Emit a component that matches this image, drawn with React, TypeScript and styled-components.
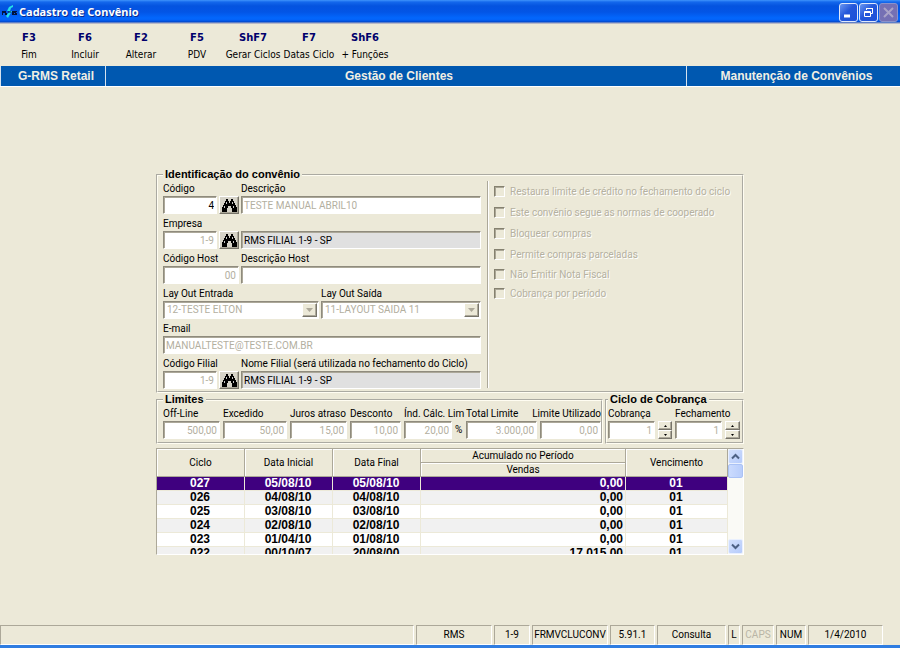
import React, { useId } from "react";
import styled, { createGlobalStyle, css } from "styled-components";

const face = "#ece9d8";
const shade = "#aca899";
const ui = "Roboto, 'Liberation Sans', sans-serif";
const strong = "'Liberation Sans', Arial, sans-serif";

const GlobalStyle = createGlobalStyle`
  *, *::before, *::after { box-sizing: border-box; }
  body { margin: 0; background: ${face}; }
  button, input, select { font: inherit; margin: 0; border-radius: 0; }
`;

const Window = styled.div`
  min-height: 100vh;
  display: flex;
  flex-direction: column;
  background: ${face};
  color: #000;
  font: 10px/14px ${ui};
  border-bottom: 3px solid #2f7de1;
`;

const TitleBar = styled.header`
  display: flex;
  align-items: center;
  height: 24px;
  padding: 0 2px;
  background: linear-gradient(#3f94fb 0, #1468ec 2px, #0453df 6px, #0355e6 12px, #0367fd 18px, #0362f8 20px, #0346c8 22px, #b8b9c8 23px, #b8b9c8 24px);
`;

const Title = styled.h1`
  flex: 1;
  margin: 0 0 0 2px;
  font: bold 11px/22px "Noto Sans", sans-serif;
  color: #fff;
  text-shadow: 1px 1px 0 #0a2a8c;
`;

const Caption = styled.div`
  display: flex;
  gap: 1px;
`;

const CaptionButton = styled.button`
  width: 19px;
  height: 19px;
  padding: 0;
  display: grid;
  place-items: center;
  border: 1px solid #dfe8fb;
  border-radius: 3px;
  background: linear-gradient(135deg, #6a97f2, #2457da 45%, #1c50d8);
  &:disabled {
    border-color: #8a92cc;
    background: #7570b4;
  }
`;

const Toolbar = styled.nav`
  display: flex;
  padding: 7px 0 3px 1px;
  min-height: 42px;
`;

const Tool = styled.button`
  width: 56px;
  padding: 0;
  border: 0;
  background: none;
  color: #000;
  white-space: nowrap;
  display: flex;
  flex-direction: column;
  align-items: center;
  gap: 2px;
  font: 10px/16px "DejaVu Sans Condensed", "DejaVu Sans", sans-serif;
`;

const ToolKey = styled.b`
  font: bold 10px/14px "DejaVu Sans", sans-serif;
  color: #00006c;
`;

const Banner = styled.div`
  display: flex;
  height: 21px;
  background: #0058b0;
  color: #f1efe4;
  font: bold 12px/21px ${strong};
  text-align: center;
  border-bottom: 1px solid #fff;
`;

const BannerCell = styled.div<{ $width?: number }>`
  ${p => (p.$width ? css`flex: 0 0 ${p.$width}px;` : css`flex: 1;`)}
  padding-left: 6px;
  border-left: 1px solid #d5e2ee;
  white-space: nowrap;
`;

const Main = styled.main`
  flex: 1;
  width: 588px;
  max-width: 100%;
  margin: 0 auto;
  padding: 81px 0 16px;
`;

const Group = styled.fieldset`
  min-width: 0;
  margin: 0;
  padding: 0 2px 0 5px;
  border: 2px groove #fffdf2;
`;

const Legend = styled.legend`
  padding: 0 2px;
  font: bold 11px/13px ${strong};
`;

const IdentGroup = styled(Group)`
  display: flex;
`;

const IdentFields = styled.div`
  flex: 0 1 318px;
  min-width: 0;
`;

const FieldRow = styled.div<{ $cols: string }>`
  display: grid;
  grid-template-columns: ${p => p.$cols};
  column-gap: 2px;
  align-items: end;
  padding-bottom: 2px;
`;

const FieldBox = styled.div`
  min-width: 0;
`;

const Label = styled.label<{ $end?: boolean }>`
  display: flex;
  justify-content: ${p => (p.$end ? "flex-end" : "flex-start")};
  height: 15px;
  line-height: 15px;
  white-space: nowrap;
`;

const sunken = css`
  border: 1px solid;
  border-color: #8f8b7d #fff #fff #8f8b7d;
  box-shadow: inset 1px 1px 0 ${shade};
`;

type Tone = "live" | "off" | "gray";

const TextInput = styled.input<{ $tone: Tone; $right?: boolean }>`
  display: block;
  width: 100%;
  height: 18px;
  padding: 0 2px;
  ${sunken}
  background: ${p => (p.$tone === "gray" ? "#e0e0e0" : "#fff")};
  color: ${p => (p.$tone === "off" ? "#b3af9f" : "#000")};
  text-align: ${p => (p.$right ? "right" : "left")};
  outline: 0;
`;

const SelectShell = styled.div`
  display: flex;
  height: 18px;
  ${sunken}
  background: #fff;
`;

const Select = styled.select`
  flex: 1;
  min-width: 0;
  padding: 0 3px;
  border: 0;
  background: none;
  appearance: none;
  color: #b3af9f;
  opacity: 1;
`;

const raised = css`
  border: 1px solid;
  border-color: #fff #77746a #77746a #fff;
  box-shadow: inset -1px -1px 0 ${shade};
  background: ${face};
`;

const Drop = styled.span`
  width: 15px;
  margin: 1px;
  display: grid;
  place-items: center;
  pointer-events: none;
  ${raised}
`;

const LookupButton = styled.button`
  height: 18px;
  padding: 0;
  display: grid;
  place-items: center;
  ${raised}
  background: #d6d3c8;
`;

const Options = styled.div`
  flex: 1;
  margin: 0 0 3px 6px;
  padding: 0 0 0 6px;
  border-left: 1px solid ${shade};
  box-shadow: inset 1px 0 0 #fff;
`;

const Option = styled.label<{ $tight?: boolean }>`
  display: flex;
  align-items: center;
  gap: 5px;
  height: ${p => (p.$tight ? 19 : 21)}px;
  color: #b5b1a1;
  text-shadow: 1px 1px 0 #fff;
  white-space: nowrap;
`;

const Check = styled.input`
  appearance: none;
  width: 11px;
  height: 11px;
  margin: 0;
  border: 1px solid;
  border-color: #85816f #fff #fff #85816f;
  box-shadow: inset 1px 1px 0 #aaa696;
`;

const LowerGroups = styled.div`
  display: flex;
  gap: 2px;
  margin-bottom: 4px;
`;

const LimitGroup = styled(Group)`
  flex: 1;
  padding-bottom: 3px;
`;

const CycleGroup = styled(Group)`
  flex: 0 0 139px;
  padding: 0 1px 3px;
`;

const Limits = styled.div`
  display: flex;
  gap: 3px;
`;

const Limit = styled.div<{ $width: number }>`
  flex: 0 0 ${p => p.$width}px;
  min-width: 0;
`;

const Amount = styled.div`
  display: flex;
  align-items: center;
  gap: 3px;
`;

const AmountInput = styled(TextInput)<{ $size: number }>`
  flex: 0 0 ${p => p.$size}px;
  width: ${p => p.$size}px;
`;

const Spinner = styled.span`
  display: flex;
  flex-direction: column;
  width: 15px;
`;

const SpinButton = styled.button`
  height: 9px;
  padding: 0;
  display: grid;
  place-items: center;
  ${raised}
`;

const GridFrame = styled.div`
  display: flex;
  height: 107px;
  overflow: hidden;
  border: 1px solid;
  border-color: ${shade} #fff #fff ${shade};
  background: #fff;
`;

const GridView = styled.div`
  flex: 1;
  min-width: 0;
  overflow: hidden;
`;

const Table = styled.table`
  width: 100%;
  table-layout: fixed;
  border-collapse: separate;
  border-spacing: 0;
`;

const Th = styled.th`
  height: 14px;
  padding: 0;
  font-weight: normal;
  line-height: 13px;
  background: ${face};
  border-right: 1px solid ${shade};
  border-bottom: 1px solid ${shade};
  box-shadow: inset 1px 1px 0 #fff;
`;

const Tr = styled.tr<{ $selected?: boolean }>`
  background: ${p => (p.$selected ? "#3f007f" : "#fff")};
  color: ${p => (p.$selected ? "#fff" : "#000")};
  &:nth-child(even) { background: #f1f1f1; }
`;

const Td = styled.td<{ $right?: boolean }>`
  height: 14px;
  padding: 0 2px 0 1px;
  font: bold 12px/13px ${strong};
  text-align: ${p => (p.$right ? "right" : "center")};
  border-right: 1px solid ${face};
  border-bottom: 1px solid ${face};
`;

const ScrollTrack = styled.div`
  flex: 0 0 15px;
  display: flex;
  flex-direction: column;
  background: #fafaf6;
`;

const ScrollButton = styled.button`
  height: 15px;
  padding: 0;
  display: grid;
  place-items: center;
  border: 1px solid #e9f0fe;
  border-radius: 2px;
  background: linear-gradient(135deg, #d3e0fd, #b5cbfb);
`;

const ScrollThumb = styled.div`
  height: 14px;
  margin-bottom: auto;
  border: 1px solid #aac2f5;
  border-radius: 2px;
  background: linear-gradient(90deg, #cbdbfe, #b8cdfb);
`;

const StatusBar = styled.footer`
  display: flex;
  gap: 2px;
  padding: 0 17px 0 0;
  line-height: 18px;
  text-align: center;
`;

const StatusCell = styled.div<{ $width?: number; $dim?: boolean }>`
  ${p => (p.$width ? css`flex: 0 0 ${p.$width}px;` : css`flex: 1;`)}
  min-width: 0;
  height: 20px;
  border: 1px solid;
  border-color: ${shade} #fff #fff ${shade};
  color: ${p => (p.$dim ? "#b9b5a6" : "#000")};
  white-space: nowrap;
`;

const Binoculars = () => (
  <svg width="15" height="13" viewBox="0 0 15 13" aria-hidden="true">
    <path d="M4 0h2v2h1v2h1V2h1V0h2v2h1v2h1v2h1v2h1v5h-5V9H9V7H6v2H5v4H0V8h1V6h1V4h1V2h1z" fill="#000" />
    <path d="M4.500 3v2M2.500 7v2M10.500 3v2M11.500 7v2" stroke="#c8c8c8" />
  </svg>
);

const Triangle = ({ up, size = 5, color = "#000" }: { up?: boolean; size?: number; color?: string }) => (
  <svg width={size} height={(size + 1) / 2} viewBox="0 0 10 6" preserveAspectRatio="none" aria-hidden="true">
    <path d={up ? "M5 0 10 6H0z" : "M0 0h10L5 6z"} fill={color} />
  </svg>
);

const Chevron = ({ up }: { up?: boolean }) => (
  <svg width="9" height="7" viewBox="0 0 9 7" aria-hidden="true">
    <path d={up ? "M1 5.500 4.500 2 8 5.500" : "M1 1.500 4.500 5 8 1.500"} fill="none" stroke="#4d6185" strokeWidth="2" />
  </svg>
);

const AppLogo = () => (
  <svg width="15" height="14" viewBox="0 0 15 14" aria-hidden="true">
    <path d="M0 6h4v2H1v2H0zM3 8h2v2H3zM10 6h2v4h-2zM12 6h3v1h-1v1h1v2h-3V9h1V8h-1z" fill="#02143c" />
    <path d="M11 0 7 2 5 6h3l-4 5 2 2 1-2 3-5H8l1-3 2-1z" fill="#25e0e6" />
    <path d="M6 7h3" stroke="#02143c" />
  </svg>
);

interface FieldProps {
  label: string;
  value: string;
  tone?: Tone;
  right?: boolean;
}

const Field = ({ label, value, tone = "off", right }: FieldProps) => {
  const id = useId();
  return (
    <FieldBox>
      <Label htmlFor={id}>{label}</Label>
      <TextInput id={id} defaultValue={value} readOnly={tone !== "live"} $tone={tone} $right={right} />
    </FieldBox>
  );
};

const SelectField = ({ label, value }: { label: string; value: string }) => {
  const id = useId();
  return (
    <FieldBox>
      <Label htmlFor={id}>{label}</Label>
      <SelectShell>
        <Select id={id} disabled defaultValue={value}>
          <option>{value}</option>
        </Select>
        <Drop><Triangle size={7} color={shade} /></Drop>
      </SelectShell>
    </FieldBox>
  );
};

const Lookup = ({ label }: { label: string }) => (
  <LookupButton type="button" aria-label={label}><Binoculars /></LookupButton>
);

interface LimitProps {
  label: string;
  value: string;
  width: number;
  size?: number;
  percent?: boolean;
  spinner?: boolean;
  end?: boolean;
}

const LimitField = ({ label, value, width, size = width, percent, spinner, end }: LimitProps) => {
  const id = useId();
  return (
    <Limit $width={width}>
      <Label htmlFor={id} $end={end}>{label}</Label>
      <Amount>
        <AmountInput id={id} defaultValue={value} readOnly $tone="off" $right $size={size} />
        {percent && <span>%</span>}
        {spinner && (
          <Spinner>
            <SpinButton type="button" aria-label={`Aumentar ${label}`}><Triangle up size={3} /></SpinButton>
            <SpinButton type="button" aria-label={`Diminuir ${label}`}><Triangle size={3} /></SpinButton>
          </Spinner>
        )}
      </Amount>
    </Limit>
  );
};

const tools = [
  ["F3", "Fim"], ["F6", "Incluir"], ["F2", "Alterar"], ["F5", "PDV"],
  ["ShF7", "Gerar Ciclos"], ["F7", "Datas Ciclo"], ["ShF6", "+ Funções"],
];

const options = [
  "Restaura limite de crédito no fechamento do ciclo",
  "Este convênio segue as normas de cooperado",
  "Bloquear compras",
  "Permite compras parceladas",
  "Não Emitir Nota Fiscal",
  "Cobrança por período",
];

const limits: LimitProps[] = [
  { label: "Off-Line", value: "500,00", width: 57 },
  { label: "Excedido", value: "50,00", width: 64 },
  { label: "Juros atraso", value: "15,00", width: 57 },
  { label: "Desconto", value: "10,00", width: 51 },
  { label: "Índ. Cálc. Lim", value: "20,00", width: 59, size: 48, percent: true },
  { label: "Total Limite", value: "3.000,00", width: 71 },
  { label: "Limite Utilizado", value: "0,00", width: 61, end: true },
];

const cycles = [
  ["027", "05/08/10", "05/08/10", "0,00", "01"],
  ["026", "04/08/10", "04/08/10", "0,00", "01"],
  ["025", "03/08/10", "03/08/10", "0,00", "01"],
  ["024", "02/08/10", "02/08/10", "0,00", "01"],
  ["023", "01/04/10", "01/08/10", "0,00", "01"],
  ["022", "00/10/07", "20/08/00", "17.015,00", "01"],
];

const status: { text: string; width?: number; dim?: boolean }[] = [
  { text: "" },
  { text: "RMS", width: 76 },
  { text: "1-9", width: 36 },
  { text: "FRMVCLUCONV", width: 76 },
  { text: "5.91.1", width: 45 },
  { text: "Consulta", width: 69 },
  { text: "L", width: 12 },
  { text: "CAPS", width: 32, dim: true },
  { text: "NUM", width: 30 },
  { text: "1/4/2010", width: 75 },
];

export default function App() {
  return (
    <Window>
      <GlobalStyle />
      <TitleBar>
        <AppLogo />
        <Title>Cadastro de Convênio</Title>
        <Caption>
          <CaptionButton type="button" aria-label="Minimizar">
            <svg width="13" height="13"><path d="M2 10h6" stroke="#fff" strokeWidth="3" /></svg>
          </CaptionButton>
          <CaptionButton type="button" aria-label="Restaurar">
            <svg width="13" height="13" fill="none" stroke="#fff">
              <path d="M4.500 4V2.500h6v5H9M4 2.500h7" />
              <path d="M2.500 5.500h6v5h-6zM2 6.500h7" />
            </svg>
          </CaptionButton>
          <CaptionButton type="button" aria-label="Fechar" disabled>
            <svg width="13" height="13"><path d="m2 2 9 9M11 2l-9 9" stroke="#aaa3c8" strokeWidth="2" /></svg>
          </CaptionButton>
        </Caption>
      </TitleBar>

      <Toolbar>
        {tools.map(([key, name]) => (
          <Tool type="button" key={key}><ToolKey>{key}</ToolKey>{name}</Tool>
        ))}
      </Toolbar>

      <Banner>
        <BannerCell $width={105}>G-RMS Retail</BannerCell>
        <BannerCell>Gestão de Clientes</BannerCell>
        <BannerCell $width={214}>Manutenção de Convênios</BannerCell>
      </Banner>

      <Main>
        <IdentGroup>
          <Legend>Identificação do convênio</Legend>
          <IdentFields>
            <FieldRow $cols="54px 20px 1fr">
              <Field label="Código" value="4" tone="live" right />
              <Lookup label="Pesquisar código" />
              <Field label="Descrição" value="TESTE MANUAL ABRIL10" />
            </FieldRow>
            <FieldRow $cols="54px 20px 1fr">
              <Field label="Empresa" value="1-9" right />
              <Lookup label="Pesquisar empresa" />
              <Field label="" value="RMS FILIAL 1-9 - SP" tone="gray" />
            </FieldRow>
            <FieldRow $cols="76px 1fr">
              <Field label="Código Host" value="00" right />
              <Field label="Descrição Host" value="" />
            </FieldRow>
            <FieldRow $cols="156px 1fr">
              <SelectField label="Lay Out Entrada" value="12-TESTE ELTON" />
              <SelectField label="Lay Out Saída" value="11-LAYOUT SAIDA 11" />
            </FieldRow>
            <FieldRow $cols="1fr">
              <Field label="E-mail" value="MANUALTESTE@TESTE.COM.BR" />
            </FieldRow>
            <FieldRow $cols="54px 20px 1fr">
              <Field label="Código Filial" value="1-9" right />
              <Lookup label="Pesquisar filial" />
              <Field label="Nome Filial (será utilizada no fechamento do Ciclo)" value="RMS FILIAL 1-9 - SP" tone="gray" />
            </FieldRow>
          </IdentFields>
          <Options>
            {options.map((text, i) => (
              <Option key={text} $tight={i > 3}>
                <Check type="checkbox" disabled />
                {text}
              </Option>
            ))}
          </Options>
        </IdentGroup>

        <LowerGroups>
          <LimitGroup>
            <Legend>Limites</Legend>
            <Limits>{limits.map(l => <LimitField key={l.label} {...l} />)}</Limits>
          </LimitGroup>
          <CycleGroup>
            <Legend>Ciclo de Cobrança</Legend>
            <Limits>
              <LimitField label="Cobrança" value="1" width={64} size={47} spinner />
              <LimitField label="Fechamento" value="1" width={65} size={47} spinner />
            </Limits>
          </CycleGroup>
        </LowerGroups>

        <GridFrame>
          <GridView>
            <Table>
              <colgroup>
                <col width="88" /><col width="88" /><col width="88" /><col width="205" /><col width="102" />
              </colgroup>
              <thead>
                <tr>
                  <Th rowSpan={2}>Ciclo</Th>
                  <Th rowSpan={2}>Data Inicial</Th>
                  <Th rowSpan={2}>Data Final</Th>
                  <Th>Acumulado no Período</Th>
                  <Th rowSpan={2}>Vencimento</Th>
                </tr>
                <tr><Th>Vendas</Th></tr>
              </thead>
              <tbody>
                {cycles.map((row, i) => (
                  <Tr key={row[0]} $selected={i === 0}>
                    {row.map((cell, c) => <Td key={c} $right={c === 3}>{cell}</Td>)}
                  </Tr>
                ))}
              </tbody>
            </Table>
          </GridView>
          <ScrollTrack>
            <ScrollButton type="button" aria-label="Rolar para cima"><Chevron up /></ScrollButton>
            <ScrollThumb />
            <ScrollButton type="button" aria-label="Rolar para baixo"><Chevron /></ScrollButton>
          </ScrollTrack>
        </GridFrame>
      </Main>

      <StatusBar>
        {status.map((s, i) => <StatusCell key={i} $width={s.width} $dim={s.dim}>{s.text}</StatusCell>)}
      </StatusBar>
    </Window>
  );
}
